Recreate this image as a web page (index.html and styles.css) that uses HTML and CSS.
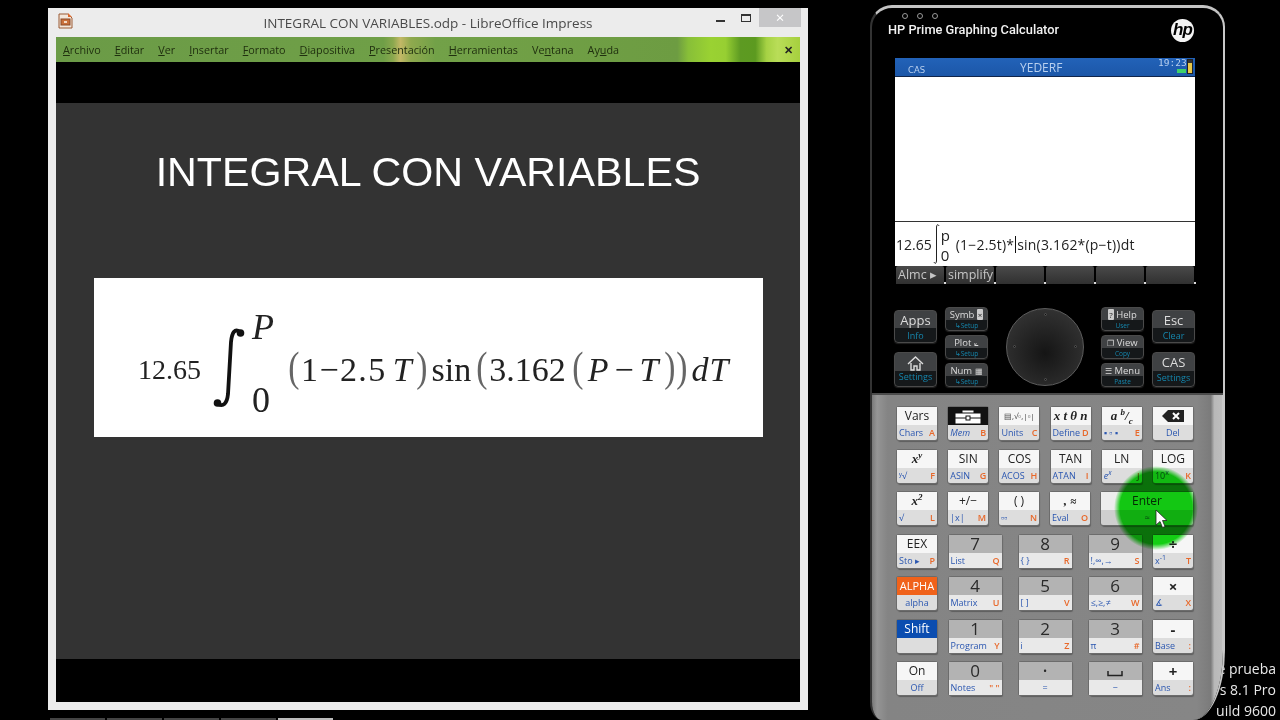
FILE: index.html
```html
<!DOCTYPE html>
<html lang="es">
<head>
  <meta charset="UTF-8">
  <title>INTEGRAL CON VARIABLES</title>
  <link rel="stylesheet" href="styles.css">
</head>
<body>
  <div class="desktop-note">
    <div>e prueba</div>
    <div>vs 8.1 Pro</div>
    <div>uild 9600</div>
  </div>

  <div class="taskbar">
    <span class="task"></span><span class="task"></span><span class="task"></span><span class="task"></span><span class="task task-on"></span>
  </div>

  <!-- Impress window -->
  <div class="impress">
    <div class="titlebar">
      <svg class="app-icon" width="15" height="16" viewBox="0 0 15 16">
        <path d="M1 1h9l4 4v10H1z" fill="#f3e6da" stroke="#9a5a35"/>
        <path d="M10 0l4 4h-4z" fill="#d9662a"/>
        <rect x="3" y="6" width="9" height="6" fill="#c9703c" stroke="#8a4a28"/>
        <rect x="6" y="8" width="3" height="2" fill="#f3d9c4"/>
      </svg>
      <div class="doc-title">INTEGRAL CON VARIABLES.odp - LibreOffice Impress</div>
      <div class="win-buttons">
        <span class="win-min"></span>
        <span class="win-max"></span>
        <span class="win-close">×</span>
      </div>
    </div>
    <div class="menubar">
      <span class="menu"><u>A</u>rchivo</span>
      <span class="menu"><u>E</u>ditar</span>
      <span class="menu"><u>V</u>er</span>
      <span class="menu"><u>I</u>nsertar</span>
      <span class="menu"><u>F</u>ormato</span>
      <span class="menu"><u>D</u>iapositiva</span>
      <span class="menu"><u>P</u>resentación</span>
      <span class="menu"><u>H</u>erramientas</span>
      <span class="menu">Ve<u>n</u>tana</span>
      <span class="menu">Ay<u>u</u>da</span>
      <span class="menu-close">✕</span>
    </div>
    <div class="stage">
      <div class="slide">
        <h1 class="slide-title">INTEGRAL CON VARIABLES</h1>
        <div class="formula-box">
          <span class="f-coef">12.65</span>
          <svg class="f-integral" width="32" height="80" viewBox="0 0 32 80">
            <path d="M27 4C22 0 19 4 18 14 17 30 16 50 15 66 14 76 10 79 5 76" fill="none" stroke="#111" stroke-width="3.800" stroke-linecap="round"/>
            <circle cx="27.500" cy="5" r="3.800" fill="#111"/>
            <circle cx="4.500" cy="75" r="3.800" fill="#111"/>
          </svg>
          <div class="f-limits">
            <span class="f-upper">P</span>
            <span class="f-lower">0</span>
          </div>
          <span class="f-paren">(</span>
          <span class="f-t f-n1">1−2.5</span>
          <span class="f-t f-var f-v1">T</span>
          <span class="f-paren">)</span>
          <span class="f-t f-sin">sin</span>
          <span class="f-paren f-p2">(</span>
          <span class="f-t f-num">3.162</span>
          <span class="f-paren f-p3">(</span>
          <span class="f-t f-var f-v2">P−T</span>
          <span class="f-paren f-p4">)</span>
          <span class="f-paren">)</span>
          <span class="f-t f-var f-d">dT</span>
        </div>
      </div>
    </div>
  </div>

  <!-- calculator -->
  <div class="calc">
    <div class="calc-head">
      <div class="head-dots"><i></i><i></i><i></i></div>
      <div class="calc-name">HP Prime Graphing Calculator</div>
      <div class="hp-logo">hp</div>
    </div>

    <div class="screen">
      <div class="screen-bar">
        <span class="bar-cas">CAS</span>
        <span class="bar-title">YEDERF</span>
        <span class="bar-clock">19:23</span>
        <span class="bar-signal"></span>
        <span class="bar-batt"></span>
      </div>
      <div class="history"></div>
      <div class="entry">
        <span>12.65</span>
        <svg class="entry-int" width="7" height="40" viewBox="0 0 7 40"><path d="M6 2C5 0 4 0 3.500 3v34C3 40 2 40 1 38" fill="none" stroke="#222"/></svg>
        <span class="entry-lims"><span>p</span><span>0</span></span>
        <span class="entry-expr">(1−2.5t)*<span class="caret"></span>sin(3.162*(p−t))dt</span>
      </div>
      <div class="softkeys">
        <span class="soft">Almc ▸</span>
        <span class="soft">simplify</span>
        <span class="soft"></span>
        <span class="soft"></span>
        <span class="soft"></span>
        <span class="soft"></span>
      </div>
    </div>

    <div class="panel">
      <div class="panel-group">
        <div class="panel-col col-big">
          <div class="pkey pkey-big"><b>Apps</b><small>Info</small></div>
          <div class="pkey pkey-big pkey-tall">
            <svg width="17" height="15" viewBox="0 0 17 15"><path d="M1 8l7.500-7L16 8M4 7v7h3v-4h3v4h3V7" fill="none" stroke="#ddd" stroke-width="1.400"/></svg>
            <small>Settings</small>
          </div>
        </div>
        <div class="panel-col">
          <div class="pkey pkey-small"><b>Symb <em class="glyph-box">×</em></b><small>↳Setup</small></div>
          <div class="pkey pkey-small"><b>Plot <em class="glyph-plot">⟀</em></b><small>↳Setup</small></div>
          <div class="pkey pkey-small"><b>Num <em class="glyph-plot">▦</em></b><small>↳Setup</small></div>
        </div>
      </div>

      <div class="dial"><i class="d-top"></i><i class="d-left"></i><i class="d-right"></i><i class="d-bottom"></i></div>

      <div class="panel-group">
        <div class="panel-col">
          <div class="pkey pkey-small"><b><em class="glyph-box">?</em> Help</b><small>User</small></div>
          <div class="pkey pkey-small"><b><em class="glyph-plot">❐</em> View</b><small>Copy</small></div>
          <div class="pkey pkey-small"><b><em class="glyph-plot">☰</em> Menu</b><small>Paste</small></div>
        </div>
        <div class="panel-col col-big">
          <div class="pkey pkey-big"><b>Esc</b><small>Clear</small></div>
          <div class="pkey pkey-big pkey-tall"><b>CAS</b><small>Settings</small></div>
        </div>
      </div>
    </div>

    <div class="keypad">
      <div class="key-row">
        <div class="key"><div class="key-top">Vars</div><div class="key-sub"><span>Chars</span><em>A</em></div></div>
        <div class="key"><div class="key-top key-black">
          <svg width="30" height="15" viewBox="0 0 30 15"><path d="M2 4h26v11H2zM9 4V1h12v3" fill="#fff" stroke="#111"/><path d="M2 9h26" stroke="#111"/><rect x="13" y="7" width="4" height="4" fill="#fff" stroke="#111"/></svg>
        </div><div class="key-sub"><span class="it">Mem</span><em>B</em></div></div>
        <div class="key"><div class="key-top key-tiny">▤,√▫,|▫|</div><div class="key-sub"><span>Units</span><em>C</em></div></div>
        <div class="key"><div class="key-top key-math">x t θ n</div><div class="key-sub"><span>Define</span><em>D</em></div></div>
        <div class="key"><div class="key-top key-math">a <sup>b</sup>/<sub>c</sub></div><div class="key-sub"><span>▪ ▫ ▪</span><em>E</em></div></div>
        <div class="key"><div class="key-top">
          <svg width="22" height="12" viewBox="0 0 22 12"><path d="M6 0h16v12H6L0 6z" fill="#222"/><path d="M11 3l6 6M17 3l-6 6" stroke="#fff" stroke-width="2"/></svg>
        </div><div class="key-sub key-sub-center"><span>Del</span></div></div>
      </div>

      <div class="key-row">
        <div class="key"><div class="key-top key-math">x<sup>y</sup></div><div class="key-sub"><span>ʸ√</span><em>F</em></div></div>
        <div class="key"><div class="key-top">SIN</div><div class="key-sub"><span>ASIN</span><em>G</em></div></div>
        <div class="key"><div class="key-top">COS</div><div class="key-sub"><span>ACOS</span><em>H</em></div></div>
        <div class="key"><div class="key-top">TAN</div><div class="key-sub"><span>ATAN</span><em>I</em></div></div>
        <div class="key"><div class="key-top">LN</div><div class="key-sub"><span class="it">e<sup>x</sup></span><em>J</em></div></div>
        <div class="key"><div class="key-top">LOG</div><div class="key-sub"><span>10<sup>x</sup></span><em>K</em></div></div>
      </div>

      <div class="key-row">
        <div class="key"><div class="key-top key-math">x<sup>2</sup></div><div class="key-sub"><span>√</span><em>L</em></div></div>
        <div class="key"><div class="key-top">+/−</div><div class="key-sub"><span>|x|</span><em>M</em></div></div>
        <div class="key"><div class="key-top">( )</div><div class="key-sub"><span>▫▫</span><em>N</em></div></div>
        <div class="key"><div class="key-top key-math">, <small>≈</small></div><div class="key-sub"><span>Eval</span><em>O</em></div></div>
        <div class="key key-enter"><div class="key-top">Enter</div><div class="key-sub key-sub-center"><span>≈</span></div></div>
      </div>

      <div class="key-row">
        <div class="key"><div class="key-top">EEX</div><div class="key-sub"><span>Sto ▸</span><em>P</em></div></div>
        <div class="digits">
          <div class="key key-num"><div class="key-top">7</div><div class="key-sub"><span>List</span><em>Q</em></div></div>
          <div class="key key-num"><div class="key-top">8</div><div class="key-sub"><span>{ }</span><em>R</em></div></div>
          <div class="key key-num"><div class="key-top">9</div><div class="key-sub"><span>!,∞,→</span><em>S</em></div></div>
        </div>
        <div class="key key-op"><div class="key-top">÷</div><div class="key-sub"><span>x<sup>-1</sup></span><em>T</em></div></div>
      </div>

      <div class="key-row">
        <div class="key key-alpha"><div class="key-top">ALPHA</div><div class="key-sub key-sub-center"><span>alpha</span></div></div>
        <div class="digits">
          <div class="key key-num"><div class="key-top">4</div><div class="key-sub"><span>Matrix</span><em>U</em></div></div>
          <div class="key key-num"><div class="key-top">5</div><div class="key-sub"><span>[ ]</span><em>V</em></div></div>
          <div class="key key-num"><div class="key-top">6</div><div class="key-sub"><span>≤,≥,≠</span><em>W</em></div></div>
        </div>
        <div class="key key-op"><div class="key-top">×</div><div class="key-sub"><span>∡</span><em>X</em></div></div>
      </div>

      <div class="key-row">
        <div class="key key-shift"><div class="key-top">Shift</div><div class="key-sub"></div></div>
        <div class="digits">
          <div class="key key-num"><div class="key-top">1</div><div class="key-sub"><span>Program</span><em>Y</em></div></div>
          <div class="key key-num"><div class="key-top">2</div><div class="key-sub"><span>i</span><em>Z</em></div></div>
          <div class="key key-num"><div class="key-top">3</div><div class="key-sub"><span>π</span><em>#</em></div></div>
        </div>
        <div class="key key-op"><div class="key-top">-</div><div class="key-sub"><span>Base</span><em>:</em></div></div>
      </div>

      <div class="key-row">
        <div class="key"><div class="key-top">On</div><div class="key-sub key-sub-center"><span>Off</span></div></div>
        <div class="digits">
          <div class="key key-num"><div class="key-top">0</div><div class="key-sub"><span>Notes</span><em>" "</em></div></div>
          <div class="key key-num"><div class="key-top key-dot">•</div><div class="key-sub key-sub-center"><span>=</span></div></div>
          <div class="key key-num"><div class="key-top">
            <svg width="16" height="6" viewBox="0 0 16 6"><path d="M1 0v4.500h14V0" fill="none" stroke="#222" stroke-width="1.500"/></svg>
          </div><div class="key-sub key-sub-center"><span>−</span></div></div>
        </div>
        <div class="key key-op"><div class="key-top">+</div><div class="key-sub"><span>Ans</span><em>:</em></div></div>
      </div>
    </div>
  </div>

  <!-- click highlight from the screen recorder -->
  <div class="click-spot"></div>
  <svg class="pointer" width="13" height="20" viewBox="0 0 13 20">
    <path d="M1 1v15l4-3.500 2.500 6 2.500-1-2.500-6H12z" fill="#fff" stroke="#222" stroke-width=".8"/>
  </svg>
</body>
</html>
```

FILE: styles.css
```css
* {
  margin: 0;
  padding: 0;
  box-sizing: border-box;
}

body {
  width: 1280px;
  height: 720px;
  overflow: hidden;
  position: relative;
  background: #000;
  font-family: "Open Sans", sans-serif;
}

/* desktop */
.desktop-note {
  position: absolute;
  right: 4px;
  top: 658px;
  text-align: right;
  color: #e8e8e8;
  font-size: 14px;
  line-height: 21px;
}

.taskbar {
  position: absolute;
  left: 0;
  bottom: 0;
  display: flex;
  gap: 2px;
  height: 2px;
  padding-left: 50px;
}

.task {
  width: 55px;
  background: #444;
}

.task-on {
  background: #bbb;
}

/* impress window */
.impress {
  position: absolute;
  left: 48px;
  top: 8px;
  width: 760px;
  height: 702px;
  padding: 0 8px 8px;
  background: #ececec;
  display: flex;
  flex-direction: column;
}

.titlebar {
  height: 29px;
  flex: none;
  display: flex;
  align-items: center;
  justify-content: center;
  position: relative;
}

.app-icon {
  position: absolute;
  left: 2px;
  top: 5px;
}

.doc-title {
  font-size: 13.500px;
  color: #4a4a4a;
}

.win-buttons {
  position: absolute;
  right: -1px;
  top: 0;
  display: flex;
  align-items: flex-start;
}

.win-min {
  width: 9px;
  height: 2px;
  margin: 12px 16px 0 0;
  background: #333;
}

.win-max {
  width: 10px;
  height: 8px;
  margin: 6px 8px 0 0;
  border: 1px solid #333;
  border-top-width: 2px;
}

.win-close {
  width: 42px;
  height: 19px;
  background: #c6c6c8;
  color: #fff;
  font-size: 15px;
  line-height: 18px;
  text-align: center;
}

.menubar {
  height: 25px;
  flex: none;
  display: flex;
  align-items: center;
  padding-left: 7px;
  position: relative;
  font-size: 10.800px;
  color: #20300f;
  background: linear-gradient(90deg, #6b9b47 0, #6f9f47 44%, #8aa84e 45.300%, #c3b866 46.300%, #8fa94e 47.700%, #72a148 51%, #6d9c42 83.500%, #88bf38 85%, #9ad232 88%, #97cf32 90%, #5d9a22 92%, #5c9a20 94%, #a6d244 95.500%, #b9dd58 97%, #a6d03e 100%);
}

.menu {
  margin-right: 14px;
  white-space: nowrap;
}

.menu-close {
  position: absolute;
  right: 7px;
  top: 5px;
  font-size: 11px;
  font-weight: 700;
  color: #222;
}

.stage {
  flex: 1;
  background: #000;
  padding: 41px 0 43px;
  display: flex;
}

.slide {
  flex: 1;
  background: #333;
  display: flex;
  flex-direction: column;
  align-items: center;
}

.slide-title {
  margin-top: 44px;
  margin-bottom: 81px;
  height: 50px;
  font: 400 41.200px/50px "Liberation Sans", sans-serif;
  color: #fff;
}

.formula-box {
  width: 669px;
  height: 159px;
  margin-left: 1px;
  padding: 24px 0 0 44px;
  background: #fff;
  display: flex;
  align-items: center;
  font-family: "Liberation Serif", serif;
  color: #222;
}

.f-coef {
  font-size: 28px;
  margin-right: 12px;
}

.f-integral {
  flex: none;
  margin-top: -4px;
}

.f-limits {
  display: flex;
  flex-direction: column;
  width: 42px;
  padding-left: 7px;
  font-size: 36px;
  line-height: 48px;
  margin-top: -12px;
}

.f-upper {
  font-style: italic;
  margin-bottom: 25px;
}

.f-paren {
  width: 12px;
  text-align: center;
  font-size: 42px;
  color: #666;
  line-height: 1;
  margin-top: -5px;
  transform: scaleX(.8);
}

.f-t {
  font-size: 34px;
  white-space: nowrap;
}

.f-var {
  font-style: italic;
}

.f-n1 {
  margin-left: 2px;
  letter-spacing: 1.400px;
}

.f-v1 {
  margin: 0 3px 0 6px;
}

.f-sin {
  margin-left: 5px;
}

.f-p2 {
  margin-left: 4px;
}

.f-num {
  margin-left: 2px;
}

.f-p3 {
  margin-left: 5px;
}

.f-v2 {
  margin-left: 5px;
  letter-spacing: 4px;
}

.f-p4 {
  margin-left: 1px;
}

.f-d {
  margin-left: 4px;
  letter-spacing: 1px;
}

/* calculator */
.calc {
  position: absolute;
  left: 870px;
  top: 5px;
  width: 355px;
  height: 715px;
  display: flex;
  flex-direction: column;
  border-radius: 22px 22px 32px 12px / 22px 22px 70px 18px;
  overflow: hidden;
  background: #000;
  border-top: 3px solid #c4c4c4;
  border-right: 2px solid #c8c8c8;
  border-left: 2px solid #333;
}

.calc-head {
  height: 50px;
  flex: none;
  position: relative;
}

.head-dots {
  position: absolute;
  left: 30px;
  top: 5px;
  display: flex;
  gap: 9px;
}

.head-dots i {
  width: 6px;
  height: 6px;
  border: 1px solid #999;
  border-radius: 50%;
}

.calc-name {
  position: absolute;
  left: 16px;
  top: 14px;
  font-family: Roboto, sans-serif;
  font-weight: 500;
  font-size: 12.800px;
  color: #f2f2f2;
}

.hp-logo {
  position: absolute;
  left: 299px;
  top: 11px;
  width: 23px;
  height: 23px;
  border-radius: 50%;
  background: #f4f4f4;
  color: #000;
  font: italic 700 17px/21px "Liberation Sans", sans-serif;
  text-align: center;
  letter-spacing: -1px;
}

.screen {
  margin-left: 23px;
  width: 300px;
  flex: none;
  background: #fff;
}

.screen-bar {
  height: 19px;
  background: linear-gradient(#2262b8, #1c57a8);
  border-bottom: 1px solid #10254a;
  position: relative;
  color: #b9d0ef;
}

.bar-cas {
  position: absolute;
  left: 13px;
  top: 7px;
  font: 8.500px/10px "DejaVu Sans", sans-serif;
}

.bar-title {
  position: absolute;
  left: 125px;
  top: 2px;
  font: 12px/16px "Open Sans", sans-serif;
}

.bar-clock {
  position: absolute;
  left: 263px;
  top: 0;
  font: 9.500px/10px "DejaVu Sans Mono", monospace;
}

.bar-signal {
  position: absolute;
  left: 282px;
  top: 11px;
  width: 9px;
  height: 4px;
  background: #3fd06a;
}

.bar-batt {
  position: absolute;
  right: 2px;
  top: 1px;
  width: 6px;
  height: 15px;
  background: linear-gradient(#333 0 20%, #e9c94a 20%);
  border: 1px solid #222;
}

.history {
  height: 145px;
  border-bottom: 1px solid #333;
}

.entry {
  height: 44px;
  display: flex;
  align-items: center;
  padding-left: 1px;
  font-size: 14px;
  color: #222;
  white-space: nowrap;
}

.entry-int {
  flex: none;
  margin: 0 1px 0 1px;
}

.entry-lims {
  display: flex;
  flex-direction: column;
  line-height: 20px;
  font-size: 15px;
  width: 15px;
  margin-top: 1px;
}

.entry-expr {
  letter-spacing: .2px;
}

.caret {
  display: inline-block;
  width: 1px;
  height: 17px;
  margin: 0 1px -3px;
  background: #111;
}

.softkeys {
  height: 18px;
  background: #000;
  display: flex;
  gap: 2px;
  padding-left: 1px;
}

.soft {
  width: 48px;
  background: linear-gradient(#4a4a4a, #303030);
  border-radius: 2px 2px 0 0;
  color: #c6c6c6;
  font-size: 12.500px;
  line-height: 18px;
  padding-left: 2px;
  white-space: nowrap;
  position: relative;
}

.soft::after {
  content: "";
  position: absolute;
  right: -2px;
  bottom: 0;
  width: 2px;
  height: 2px;
  background: #ddd;
}

.panel {
  height: 111px;
  flex: none;
  margin-left: 22px;
  width: 301px;
  padding-top: 23px;
  display: flex;
  justify-content: space-between;
  align-items: flex-start;
}

.panel-group {
  display: flex;
  gap: 8px;
}

.panel-col {
  display: flex;
  flex-direction: column;
  gap: 4px;
  width: 43px;
}

.col-big {
  gap: 9px;
  padding-top: 3px;
}

.pkey {
  background: linear-gradient(#3f4143 0 55%, #15181a 55%);
  border: 1px solid #4a4a4a;
  border-radius: 4px;
  display: flex;
  flex-direction: column;
  align-items: center;
  color: #dcdcdc;
  box-shadow: 0 1px 1px #222;
}

.pkey b {
  font-weight: 400;
  white-space: nowrap;
}

.pkey em {
  font-style: normal;
  font-size: 8px;
}

.glyph-box {
  background: #ccc;
  color: #222;
  padding: 0 1px;
  border-radius: 1px;
}

.pkey small {
  color: #1586ad;
  line-height: 11px;
}

.pkey-big {
  height: 33px;
}

.pkey-big b {
  font-size: 13px;
  line-height: 19px;
}

.pkey-big small {
  font-size: 9px;
}

.pkey-big svg {
  margin-top: 3px;
}

.pkey-tall {
  height: 35px;
}

.pkey-small {
  height: 24px;
}

.pkey-small b {
  font-size: 9.500px;
  line-height: 13px;
}

.pkey-small small {
  font-size: 6.500px;
  line-height: 9px;
}

.dial {
  width: 78px;
  height: 78px;
  margin-top: 1px;
  border-radius: 50%;
  background: radial-gradient(circle at 50% 58%, #151515, #303030 72%, #4a4a4a);
  border: 1px solid #5c5c5c;
  position: relative;
}

.dial i {
  position: absolute;
  width: 3px;
  height: 3px;
  border-radius: 50%;
  background: #111;
  border: 1px solid #555;
}

.d-top { left: 37px; top: 4px; }
.d-left { left: 6px; top: 36px; }
.d-right { right: 6px; top: 36px; }
.d-bottom { left: 37px; bottom: 4px; }

.keypad {
  flex: 1;
  margin: -2px -2px 0;
  padding: 12px 32px 0 27px;
  display: flex;
  flex-direction: column;
  gap: 9.500px;
  background: linear-gradient(90deg, #6e6e6e 0, #959595 2%, #8f8f8f 3%, #848484 5%, #868686 92%, #7b7b7b 96%, #b8b8b8 97%, #bdbdbd 99%, #e4e4e4 100%);
  border-top: 2px solid #4c4c4c;
}

.key-row {
  display: flex;
  justify-content: space-between;
  height: 33px;
}

.digits {
  display: flex;
  gap: 17px;
}

.key {
  width: 40px;
  height: 33px;
  display: flex;
  flex-direction: column;
  background: #ddd;
  border-radius: 2px;
  box-shadow: 0 0 0 1px #6c6c6c, 1px 2px 1px #5e5e5e;
  color: #222;
}

.key-top {
  height: 18px;
  flex: none;
  background: #f6f6f6;
  text-align: center;
  font-size: 12px;
  line-height: 18px;
  white-space: nowrap;
}

.key-top svg {
  display: block;
  margin: 3px auto 0;
}

.key-black {
  background: #111;
}

.key-black svg {
  margin-top: 2px;
}

.key-tiny {
  font-size: 8px;
  color: #444;
}

.key-math {
  font-family: "Liberation Serif", serif;
  font-style: italic;
  font-weight: 700;
  font-size: 13px;
}

.key-math sup, .key-math sub {
  font-size: 9px;
  line-height: 0;
}

.key-sub {
  flex: 1;
  display: flex;
  justify-content: space-between;
  align-items: center;
  padding: 0 2px;
  font-size: 9px;
  color: #2a56b0;
  white-space: nowrap;
}

.key-sub sup {
  font-size: 7px;
  line-height: 0;
}

.key-sub em {
  font-style: normal;
  font-weight: 600;
  color: #e8682a;
  font-size: 9px;
}

.key-sub-center {
  justify-content: center;
}

.it {
  font-style: italic;
}

.key-num {
  width: 53px;
}

.key-num .key-top {
  background: #b3b3b3;
  font-size: 17px;
  color: #2a2a2a;
  line-height: 18px;
}

.key-num .key-top svg {
  margin-top: 9px;
}

.key-num .key-dot {
  font-size: 11px;
}

.key-num .key-sub {
  background: #e9e9e9;
}

.key-op .key-top {
  font-size: 15px;
  font-weight: 700;
}

.key-enter {
  width: 92px;
  background: #cfcfcf;
}

.key-enter .key-top {
  background: #ededed;
  color: #333;
}

.key-alpha .key-top {
  background: #f0621a;
  color: #fff;
  font-size: 11px;
}

.key-shift .key-top {
  background: #0b4db0;
  color: #fff;
}

/* overlays */
.click-spot {
  position: absolute;
  left: 1114px;
  top: 466px;
  width: 84px;
  height: 84px;
  border-radius: 50%;
  background: radial-gradient(circle closest-side, #14d614 0 86%, #fff 100%);
  mix-blend-mode: multiply;
}

.pointer {
  position: absolute;
  left: 1155px;
  top: 509px;
}
```
